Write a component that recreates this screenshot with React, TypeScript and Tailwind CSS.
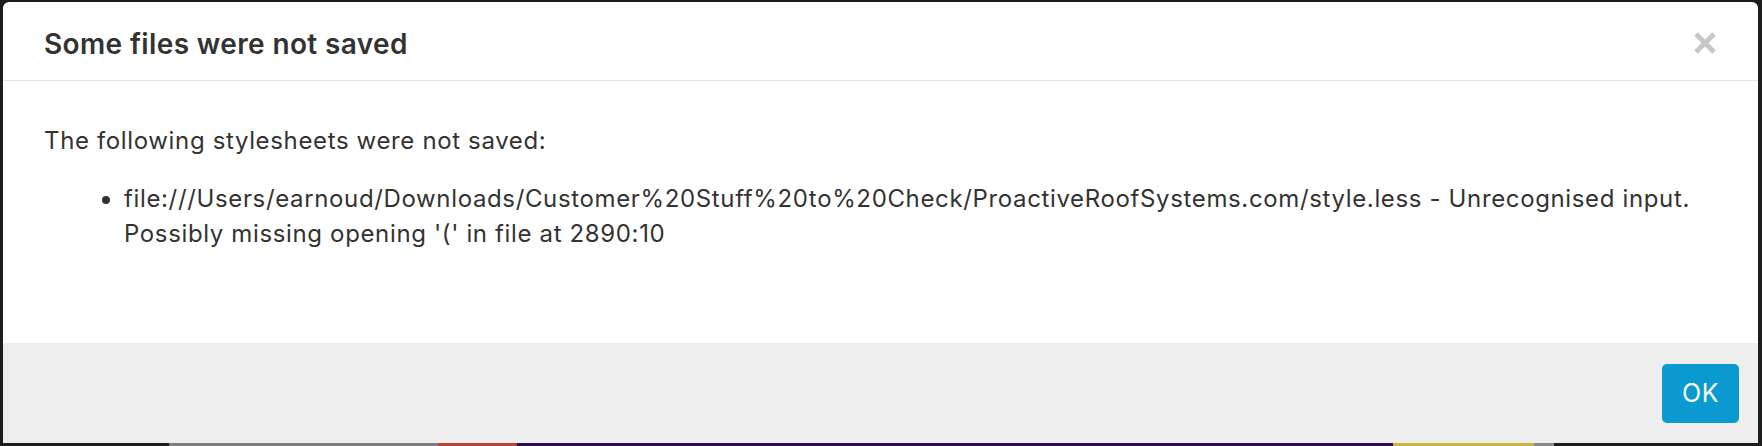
import React from "react";

export default function App() {
  const font = { fontFamily: "Inter, 'Noto Sans', sans-serif" };
  return (
    <div
      className="w-[1762px] h-[446px] bg-[#1d1d1d] flex flex-col overflow-hidden"
      style={font}
    >
      <div className="pt-[2px] pl-[3px]">
        <div className="w-[1755px] h-[441px] bg-white rounded-t-[6px] flex flex-col overflow-hidden">
          <div className="h-[79px] shrink-0 border-b border-[#e5e5e5] flex items-start justify-between pl-[41px] pr-[42px] pt-[25px]">
            <h4 className="text-[28px] leading-[34px] font-semibold text-[#333333] tracking-[0.37px]">
              Some files were not saved
            </h4>
            <svg width="22" height="22" viewBox="0 0 22 22" className="mt-[5px]">
              <path d="M2 2 L20 20 M20 2 L2 20" stroke="#c7c7c7" strokeWidth="5" strokeLinecap="butt" />
            </svg>
          </div>
          <div className="flex-1 pl-[41px] pr-[40px] pt-[43px] text-[24px] leading-[34.3px] text-[#333333] tracking-[0.64px]">
            <p>The following stylesheets were not saved:</p>
            <ul className="list-disc pl-[80px] mt-[24px]">
              <li>
                file:///Users/earnoud/Downloads/Customer%20Stuff%20to%20Check/ProactiveRoofSystems.com/style.less - Unrecognised input. Possibly missing opening '(' in file at 2890:10
              </li>
            </ul>
          </div>
          <div className="h-[100px] shrink-0 bg-[#eeeeee] flex items-center justify-end pr-[19px]">
            <button className="w-[77px] h-[59px] rounded-[5px] bg-[#0a9ad0] text-white text-[25px] leading-none tracking-[0.5px]">
              OK
            </button>
          </div>
        </div>
      </div>
      <div className="flex h-[3px]">
        <div className="w-[169px] bg-[#1d1d1d]" />
        <div className="w-[269px] bg-[#7d7d7d]" />
        <div className="w-[79px] bg-[#b8433a]" />
        <div className="w-[876px] bg-[#2b0d52]" />
        <div className="w-[141px] bg-[#c9b73a]" />
        <div className="w-[20px] bg-[#8a8a8a]" />
        <div className="flex-1 bg-[#1d1d1d]" />
      </div>
    </div>
  );
}
